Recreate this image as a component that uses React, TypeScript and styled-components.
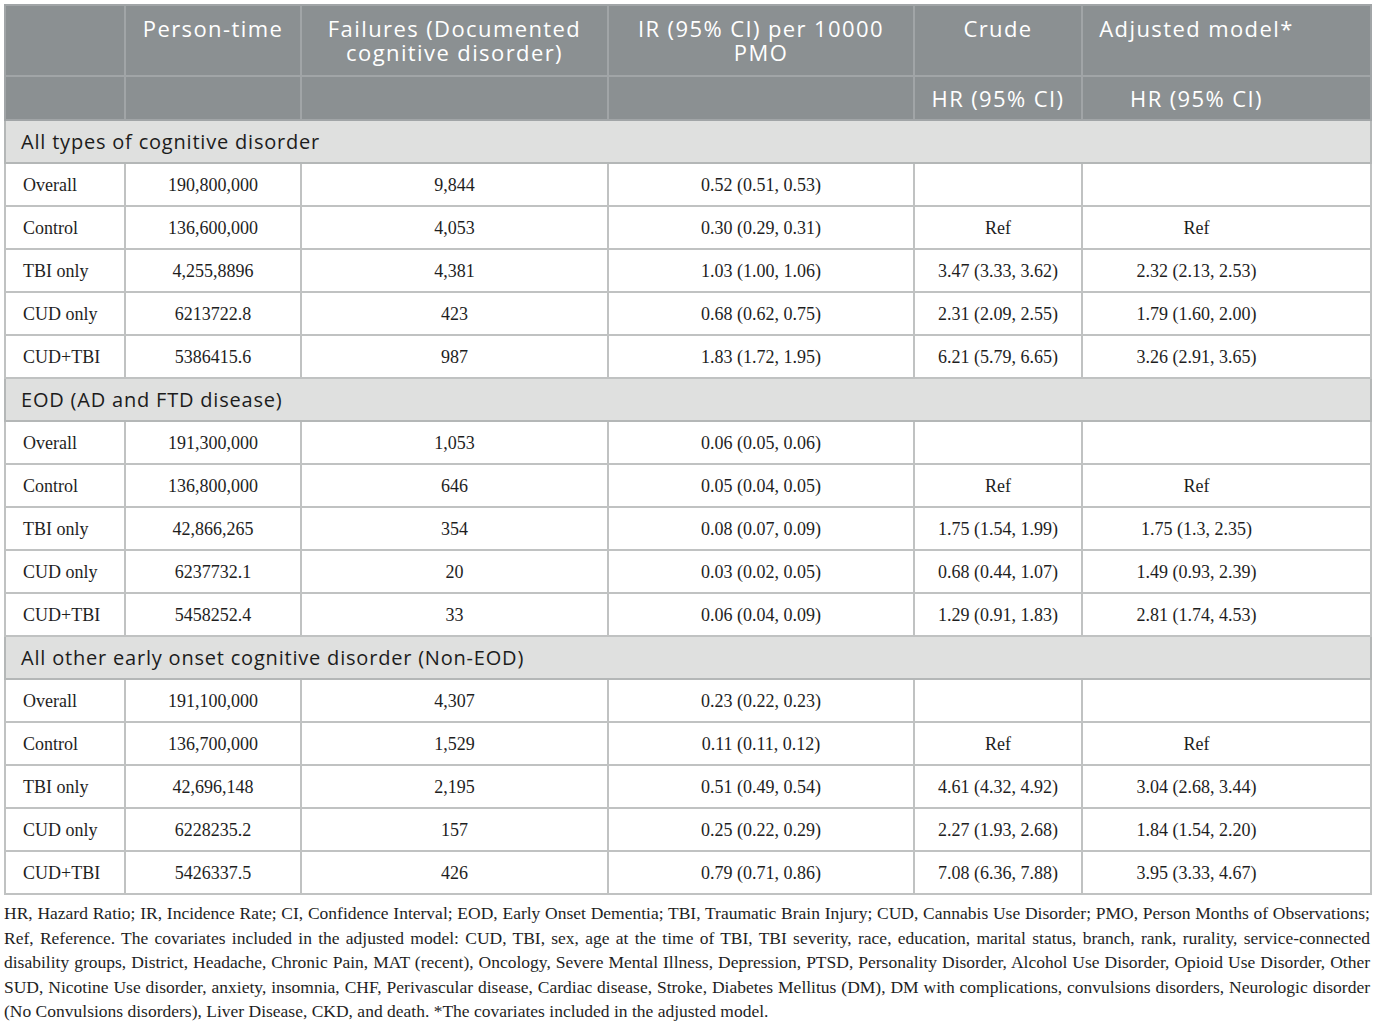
import React from "react";
import styled, { createGlobalStyle } from "styled-components";

const Global = createGlobalStyle`
  html, body { margin: 0; padding: 0; background: #ffffff; }
  body { font-family: "Liberation Serif", "Times New Roman", serif; color: #1e1e1e; }
`;

const Page = styled.div`
  padding: 4px 5px 0 4px;
  width: 1366px;
`;

const Table = styled.table`
  width: 1366px;
  border-collapse: collapse;
  table-layout: fixed;
  border: 2px solid #b4b7b7;
`;

const HeadCell = styled.th<{ $tall?: boolean; $shift?: number }>`
  background: #8b9092;
  color: #ffffff;
  font-family: "Open Sans", "Liberation Sans", sans-serif;
  font-weight: 400;
  font-size: 22px;
  line-height: 24px;
  letter-spacing: 1.4px;
  text-align: center;
  vertical-align: ${(p) => (p.$tall ? "top" : "middle")};
  padding: ${(p) => (p.$tall ? "10px 4px 11px" : "0 4px")};
  padding-right: ${(p) => 4 + (p.$shift ?? 0)}px;
  height: ${(p) => (p.$tall ? 71 : 44)}px;
  box-sizing: border-box;
  border: 2px solid #a1a5a7;
  white-space: nowrap;
`;

const HeadLine = styled.span`
  display: block;
  height: 24px;
`;

const SectionCell = styled.td`
  background: #dfe0df;
  font-family: "Open Sans", "Liberation Sans", sans-serif;
  font-size: 20px;
  letter-spacing: 0.8px;
  color: #1c1c1c;
  height: 43px;
  box-sizing: border-box;
  padding: 0 15px;
  border: 2px solid #b4b7b7;
`;

const Cell = styled.td<{ $left?: boolean; $shift?: number }>`
  font-family: "Liberation Serif", "Times New Roman", serif;
  font-size: 18px;
  color: #1e1e1e;
  height: 43px;
  box-sizing: border-box;
  text-align: ${(p) => (p.$left ? "left" : "center")};
  padding: ${(p) => (p.$left ? "2px 4px 0 17px" : "2px 4px 0")};
  padding-right: ${(p) => 4 + (p.$shift ?? 0)}px;
  border: 2px solid #c0c2c2;
  white-space: nowrap;
`;

const Note = styled.div`
  margin: 6px 0 0;
  font-family: "Liberation Serif", "Times New Roman", serif;
  font-size: 17.5px;
  line-height: 24.5px;
  color: #1e1e1e;
`;

const NoteLine = styled.div<{ $last?: boolean }>`
  text-align: ${(p) => (p.$last ? "left" : "justify")};
  text-align-last: ${(p) => (p.$last ? "left" : "justify")};
  white-space: nowrap;
`;

type Row = [string, string, string, string, string, string];

const sections: { title: string; rows: Row[] }[] = [
  {
    title: "All types of cognitive disorder",
    rows: [
      ["Overall", "190,800,000", "9,844", "0.52 (0.51, 0.53)", "", ""],
      ["Control", "136,600,000", "4,053", "0.30 (0.29, 0.31)", "Ref", "Ref"],
      ["TBI only", "4,255,8896", "4,381", "1.03 (1.00, 1.06)", "3.47 (3.33, 3.62)", "2.32 (2.13, 2.53)"],
      ["CUD only", "6213722.8", "423", "0.68 (0.62, 0.75)", "2.31 (2.09, 2.55)", "1.79 (1.60, 2.00)"],
      ["CUD+TBI", "5386415.6", "987", "1.83 (1.72, 1.95)", "6.21 (5.79, 6.65)", "3.26 (2.91, 3.65)"],
    ],
  },
  {
    title: "EOD (AD and FTD disease)",
    rows: [
      ["Overall", "191,300,000", "1,053", "0.06 (0.05, 0.06)", "", ""],
      ["Control", "136,800,000", "646", "0.05 (0.04, 0.05)", "Ref", "Ref"],
      ["TBI only", "42,866,265", "354", "0.08 (0.07, 0.09)", "1.75 (1.54, 1.99)", "1.75 (1.3, 2.35)"],
      ["CUD only", "6237732.1", "20", "0.03 (0.02, 0.05)", "0.68 (0.44, 1.07)", "1.49 (0.93, 2.39)"],
      ["CUD+TBI", "5458252.4", "33", "0.06 (0.04, 0.09)", "1.29 (0.91, 1.83)", "2.81 (1.74, 4.53)"],
    ],
  },
  {
    title: "All other early onset cognitive disorder (Non-EOD)",
    rows: [
      ["Overall", "191,100,000", "4,307", "0.23 (0.22, 0.23)", "", ""],
      ["Control", "136,700,000", "1,529", "0.11 (0.11, 0.12)", "Ref", "Ref"],
      ["TBI only", "42,696,148", "2,195", "0.51 (0.49, 0.54)", "4.61 (4.32, 4.92)", "3.04 (2.68, 3.44)"],
      ["CUD only", "6228235.2", "157", "0.25 (0.22, 0.29)", "2.27 (1.93, 2.68)", "1.84 (1.54, 2.20)"],
      ["CUD+TBI", "5426337.5", "426", "0.79 (0.71, 0.86)", "7.08 (6.36, 7.88)", "3.95 (3.33, 4.67)"],
    ],
  },
];

const noteLines = [
  "HR, Hazard Ratio; IR, Incidence Rate; CI, Confidence Interval; EOD, Early Onset Dementia; TBI, Traumatic Brain Injury; CUD, Cannabis Use Disorder; PMO, Person Months of Observations;",
  "Ref, Reference. The covariates included in the adjusted model: CUD, TBI, sex, age at the time of TBI, TBI severity, race, education, marital status, branch, rank, rurality, service-connected",
  "disability groups, District, Headache, Chronic Pain, MAT (recent), Oncology, Severe Mental Illness, Depression, PTSD, Personality Disorder, Alcohol Use Disorder, Opioid Use Disorder, Other",
  "SUD, Nicotine Use disorder, anxiety, insomnia, CHF, Perivascular disease, Cardiac disease, Stroke, Diabetes Mellitus (DM), DM with complications, convulsions disorders, Neurologic disorder",
  "(No Convulsions disorders), Liver Disease, CKD, and death. *The covariates included in the adjusted model.",
];

const widths = [120, 176, 307, 306, 168, 289];

export default function App() {
  return (
    <Page>
      <Global />
      <Table>
        <colgroup>
          {widths.map((w, i) => (
            <col key={i} style={{ width: w }} />
          ))}
        </colgroup>
        <thead>
          <tr>
            <HeadCell $tall />
            <HeadCell $tall>Person-time</HeadCell>
            <HeadCell $tall>
              <HeadLine>Failures (Documented</HeadLine>
              <HeadLine>cognitive disorder)</HeadLine>
            </HeadCell>
            <HeadCell $tall>
              <HeadLine>IR (95% CI) per 10000</HeadLine>
              <HeadLine>PMO</HeadLine>
            </HeadCell>
            <HeadCell $tall>Crude</HeadCell>
            <HeadCell $tall $shift={60}>Adjusted model*</HeadCell>
          </tr>
          <tr>
            <HeadCell />
            <HeadCell />
            <HeadCell />
            <HeadCell />
            <HeadCell>HR (95% CI)</HeadCell>
            <HeadCell $shift={60}>HR (95% CI)</HeadCell>
          </tr>
        </thead>
        <tbody>
          {sections.map((s) => (
            <React.Fragment key={s.title}>
              <tr>
                <SectionCell colSpan={6}>{s.title}</SectionCell>
              </tr>
              {s.rows.map((r, ri) => (
                <tr key={ri}>
                  {r.map((c, ci) => (
                    <Cell key={ci} $left={ci === 0} $shift={ci === 5 ? 60 : 0}>
                      {c}
                    </Cell>
                  ))}
                </tr>
              ))}
            </React.Fragment>
          ))}
        </tbody>
      </Table>
      <Note>
        {noteLines.map((l, i) => (
          <NoteLine key={i} $last={i === noteLines.length - 1}>
            {l}
          </NoteLine>
        ))}
      </Note>
    </Page>
  );
}
